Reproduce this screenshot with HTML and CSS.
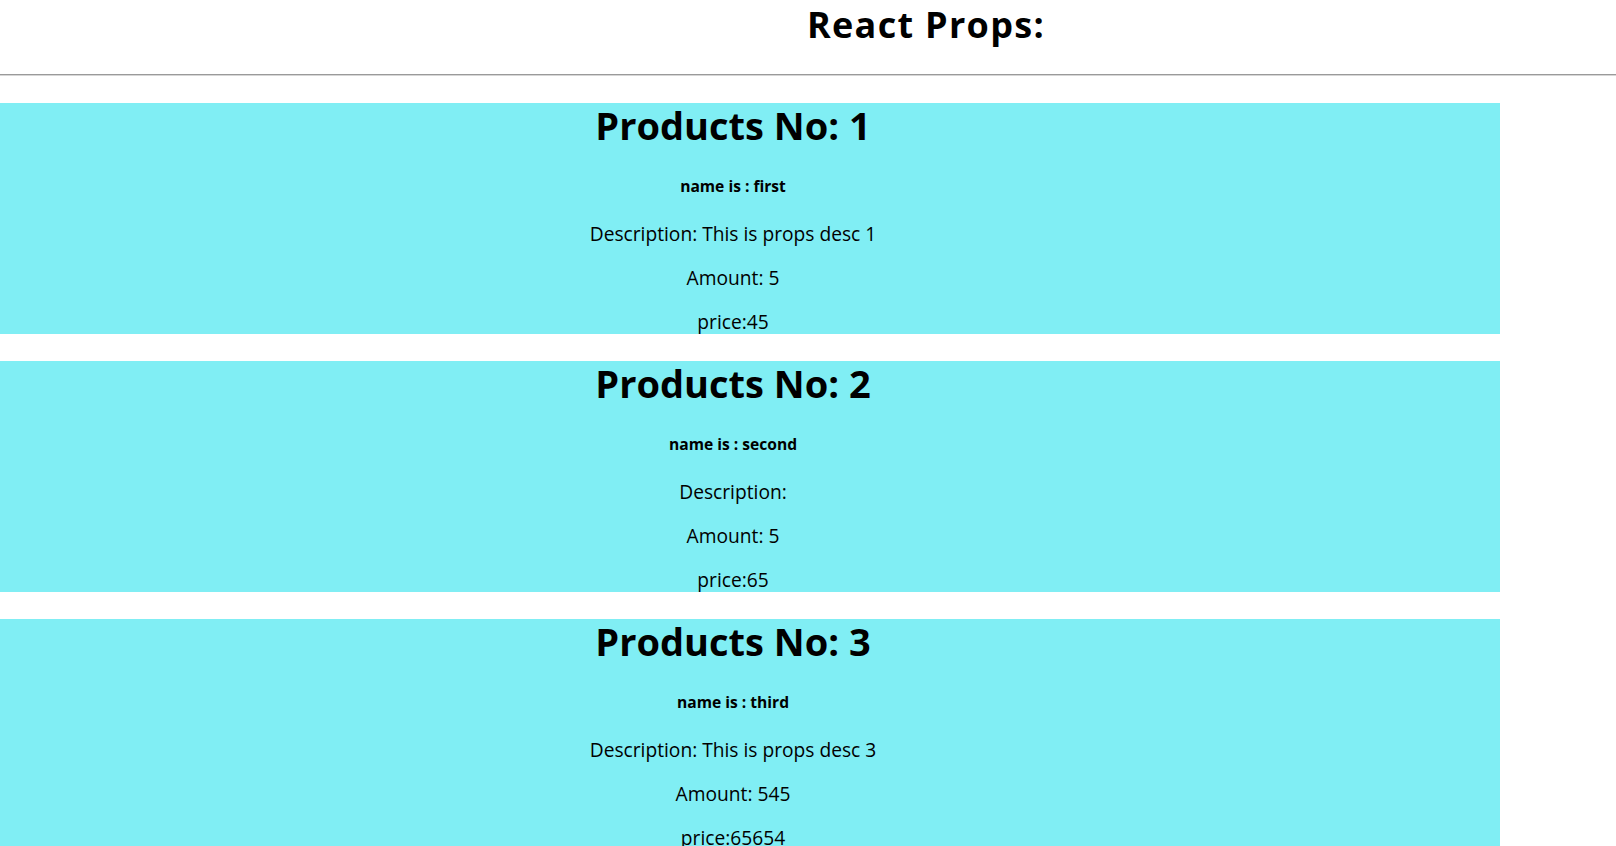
FILE: index.html
```html
<!DOCTYPE html>
<html lang="en">
<head>
<meta charset="utf-8">
<title>React Props</title>
<link rel="stylesheet" href="styles.css">
</head>
<body>
<header class="page-header">
  <h1 class="page-title">React Props:</h1>
</header>
<hr class="divider">
<main class="products">
  <section class="product">
    <h1 class="product-title">Products No: 1</h1>
    <h5 class="product-name">name is : first</h5>
    <p class="product-line">Description: This is props desc 1</p>
    <p class="product-line">Amount: 5</p>
    <p class="product-line">price:45</p>
  </section>
  <section class="product">
    <h1 class="product-title">Products No: 2</h1>
    <h5 class="product-name">name is : second</h5>
    <p class="product-line">Description: </p>
    <p class="product-line">Amount: 5</p>
    <p class="product-line">price:65</p>
  </section>
  <section class="product">
    <h1 class="product-title">Products No: 3</h1>
    <h5 class="product-name">name is : third</h5>
    <p class="product-line">Description: This is props desc 3</p>
    <p class="product-line">Amount: 545</p>
    <p class="product-line">price:65654</p>
  </section>
</main>
</body>
</html>
```

FILE: styles.css
```css
html, body {
  margin: 0;
  padding: 0;
  background: #ffffff;
  color: #000000;
  font-family: "Open Sans", "Noto Sans", sans-serif;
}

.page-header {
  padding: 4px 0 0 236px;
  text-align: center;
}

.page-title {
  margin: 0 0 29px;
  font-size: 36px;
  line-height: 41px;
  font-weight: 700;
  letter-spacing: 1.3px;
}

.divider {
  margin: 0;
  height: 0;
  border: 0;
  border-top: 1px solid #9a9a9a;
  border-bottom: 1px solid #d6d6d6;
}

.products {
  display: flex;
  flex-direction: column;
  gap: 27px;
  padding-top: 27px;
  padding-bottom: 40px;
}

.product {
  width: 1500px;
  box-sizing: border-box;
  padding: 0 34px 0 0;
  background: #80eef4;
  text-align: center;
  display: flow-root;
}

.product-title {
  margin: 0;
  font-size: 38px;
  line-height: 44px;
  font-weight: 700;
}

.product-name {
  margin: 30px 0 0;
  font-size: 15.6px;
  line-height: 19px;
  font-weight: 700;
}

.product-line {
  margin: 20px 0 0;
  font-size: 19.2px;
  line-height: 24px;
}

.product-name + .product-line {
  margin-top: 26px;
}
```
